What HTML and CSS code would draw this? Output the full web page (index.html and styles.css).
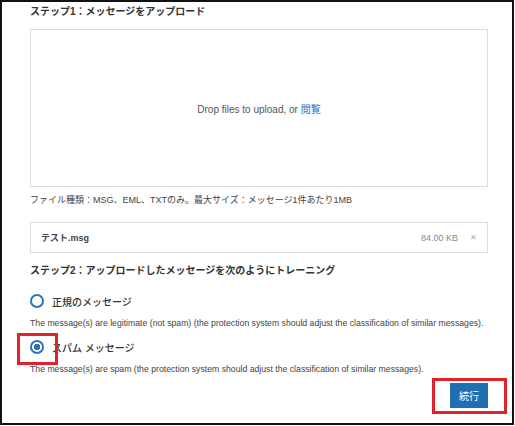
FILE: index.html
```html
<!DOCTYPE html>
<html lang="ja">

<head>
    <meta charset="UTF-8">
    <meta name="viewport" content="width=device-width, initial-scale=1.0">
    <title>メッセージのトレーニング</title>
    <link rel="stylesheet" href="styles.css">
</head>

<body>
    <div class="frame">
        <h2 class="step-title">ステップ1：メッセージをアップロード</h2>

        <div class="drop-zone">
            <span>Drop files to upload, or <a href="#" class="browse">閲覧</a></span>
        </div>

        <p class="file-note">ファイル種類：MSG、EML、TXTのみ。最大サイズ：メッセージ1件あたり1MB</p>

        <div class="file-row">
            <span class="file-name">テスト.msg</span>
            <span class="file-size">84.00 KB</span>
            <span class="file-remove">&#x2715;</span>
        </div>

        <h2 class="step-title step-two">ステップ2：アップロードしたメッセージを次のようにトレーニング</h2>

        <label class="radio-row">
            <input type="radio" name="kind" value="good">
            <span class="radio-label">正規のメッセージ</span>
        </label>
        <p class="radio-desc">The message(s) are legitimate (not spam) (the protection system should adjust the classification of similar messages).</p>

        <label class="radio-row marked">
            <input type="radio" name="kind" value="spam" checked>
            <span class="radio-label">スパム メッセージ</span>
        </label>
        <p class="radio-desc">The message(s) are spam (the protection system should adjust the classification of similar messages).</p>

        <div class="actions">
            <div class="btn-wrap">
                <button type="button" class="btn-next">続行</button>
            </div>
        </div>
    </div>
</body>

</html>
```

FILE: styles.css
```css
* {
    box-sizing: border-box;
}

body {
    margin: 0;
    font-family: "Liberation Sans", "Noto Sans CJK JP", Arial, sans-serif;
    background-color: #fff;
    color: #333;
}

.frame {
    width: 514px;
    height: 425px;
    border: 2px solid #111;
    padding: 2px 24px 0 28px;
}

.step-title {
    margin: 0 0 9px;
    font-size: 10px;
    line-height: 16px;
    font-weight: bold;
    color: #333;
}

.step-two {
    margin: 10px 0 12px;
}

.drop-zone {
    height: 158px;
    border: 1px solid #ddd;
    display: flex;
    align-items: center;
    justify-content: center;
    font-size: 10px;
    color: #555;
}

.browse {
    color: #1a73c8;
    text-decoration: none;
}

.file-note {
    margin: 6px 0 15px;
    font-size: 9px;
    line-height: 14px;
    color: #444;
}

.file-row {
    display: flex;
    align-items: center;
    height: 31px;
    border: 1px solid #ddd;
    padding: 0 10px;
    font-size: 9px;
}

.file-name {
    flex: 1;
    font-weight: 600;
    color: #444;
}

.file-size {
    color: #888;
}

.file-remove {
    margin-left: 12px;
    color: #aaa;
    font-size: 8px;
}

.radio-row {
    position: relative;
    display: flex;
    align-items: center;
    gap: 8px;
    height: 20px;
    cursor: pointer;
}

.radio-row input[type="radio"] {
    appearance: none;
    margin: 0;
    width: 14px;
    height: 14px;
    border: 2px solid #2b73b9;
    border-radius: 50%;
    background-color: #fff;
}

.radio-row input[type="radio"]:checked {
    background: radial-gradient(circle, #2b73b9 0 3px, #fff 3.5px);
}

.radio-label {
    font-size: 10px;
    font-weight: 500;
    color: #333;
}

.radio-desc {
    margin: 6px 0 8px;
    font-size: 8.7px;
    line-height: 12px;
    color: #444;
}

/* red annotation boxes */
.marked::after {
    content: '';
    position: absolute;
    left: -13px;
    top: -4px;
    width: 35px;
    height: 26px;
    border: 3px solid #e0222b;
}

.actions {
    display: flex;
    justify-content: flex-end;
}

.btn-wrap {
    position: relative;
}

.btn-wrap::after {
    content: '';
    position: absolute;
    top: -5px;
    right: -19px;
    bottom: -6px;
    left: -18px;
    border: 3px solid #e0222b;
}

.btn-next {
    display: block;
    width: 38px;
    height: 25px;
    border: none;
    background-color: #1f6fb2;
    color: #fff;
    font-family: inherit;
    font-size: 10px;
    cursor: pointer;
}
```
